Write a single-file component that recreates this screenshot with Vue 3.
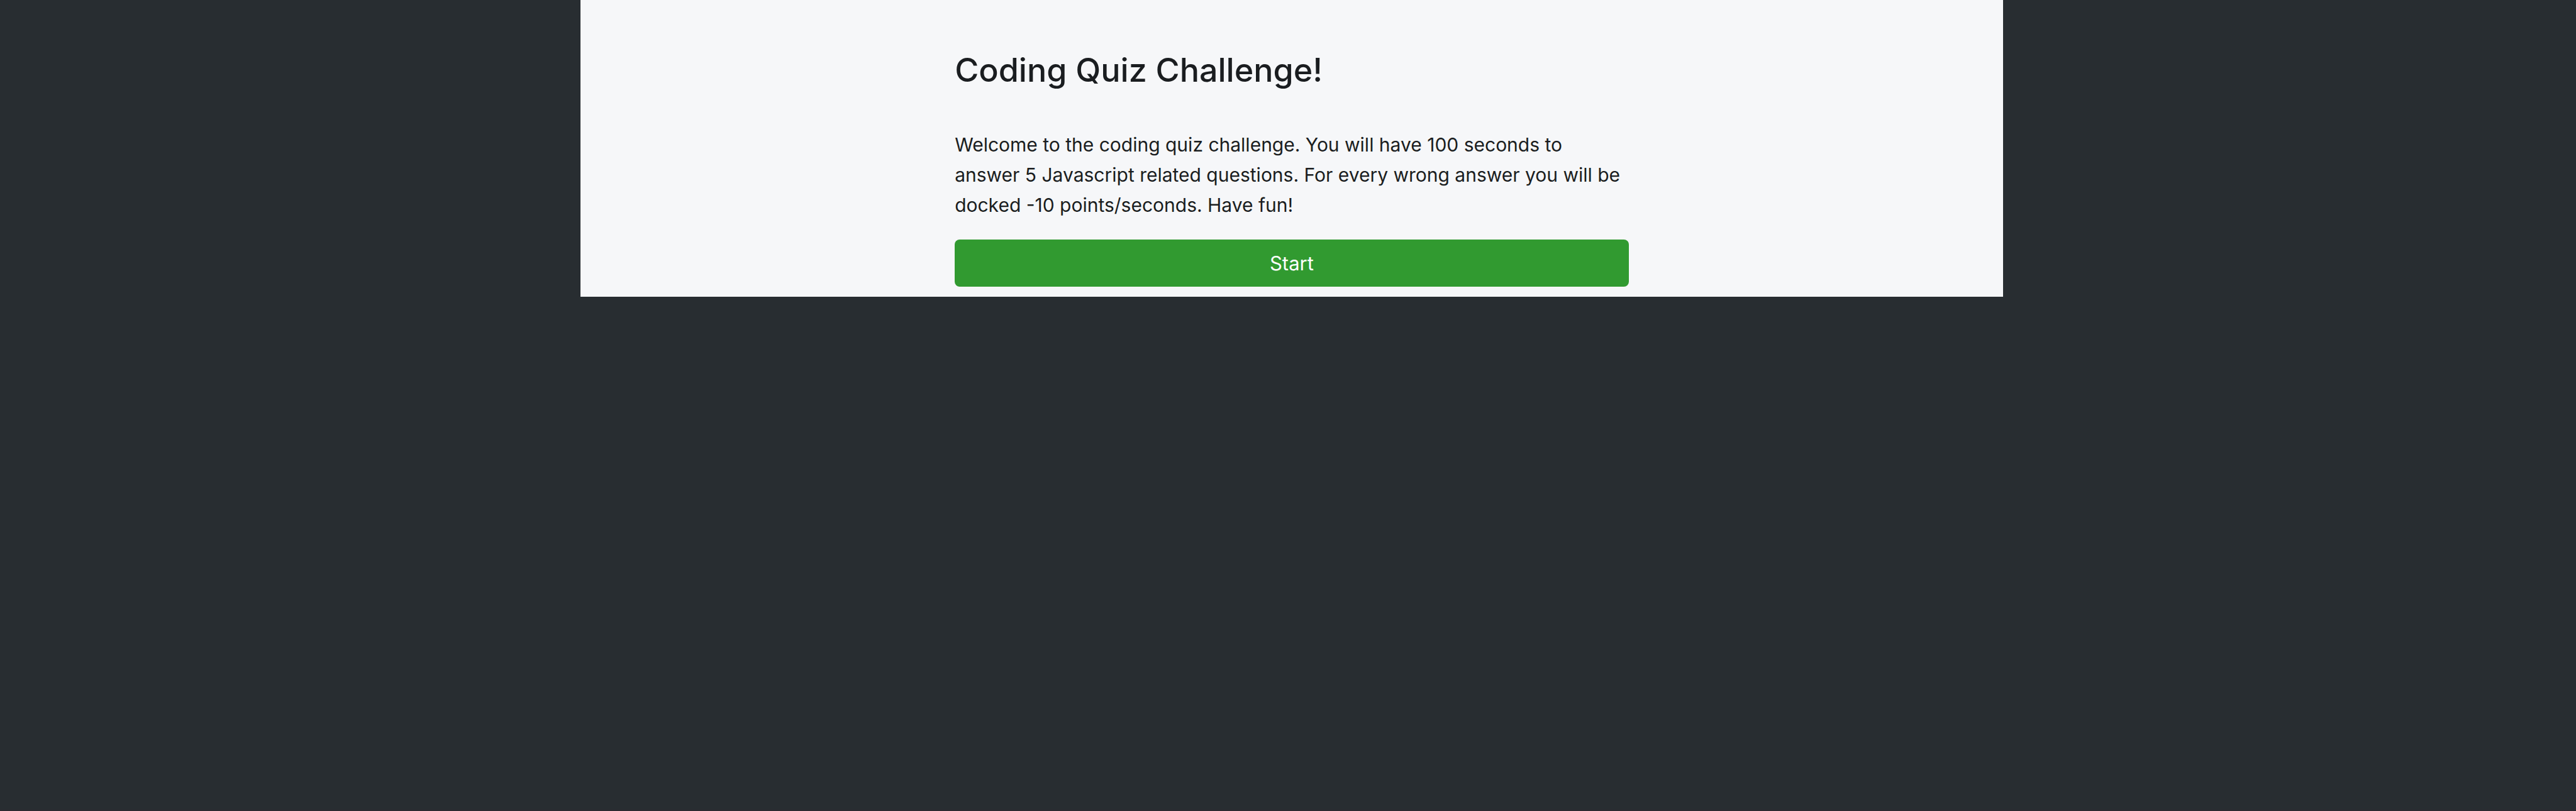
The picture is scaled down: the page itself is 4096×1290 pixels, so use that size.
<script setup>
import { ref } from 'vue'

const started = ref(false)
</script>

<template>
  <div class="page">
    <main class="panel">
      <section class="intro">
        <h1 class="title">Coding Quiz Challenge!</h1>
        <p class="text">
          Welcome to the coding quiz challenge. You will have 100 seconds to
          answer 5 Javascript related questions. For every wrong answer you will
          be docked -10 points/seconds. Have fun!
        </p>
        <button class="start" type="button" @click="started = true">Start</button>
      </section>
    </main>
  </div>
</template>

<style>
body {
  margin: 0;
  background: #282d31;
}
</style>

<style scoped>
.page {
  display: grid;
  grid-template-columns: 155fr 380fr 153fr;
  align-items: start;
  box-sizing: border-box;
  min-height: 100vh;
  border-bottom: 2px solid #2c2a31;
  background: #282d31;
  color: #1a1d20;
  font-family: Inter, "Liberation Sans", sans-serif;
}

.panel {
  grid-column: 2;
  display: grid;
  grid-template-columns: 5fr 9fr 5fr;
  background: #f6f7f9;
}

.intro {
  grid-column: 2;
  display: flex;
  flex-direction: column;
  padding: 80px 0 16px;
}

.title {
  margin: 0 0 62px;
  font-size: 52px;
  font-weight: 500;
  line-height: 64px;
}

.text {
  margin: 0 0 31px;
  font-size: 30px;
  line-height: 48px;
}

.start {
  height: 75px;
  padding: 0;
  border: 0;
  border-radius: 8px;
  background: #319a30;
  color: #fff;
  font-family: inherit;
  font-size: 31px;
  cursor: pointer;
}
</style>
